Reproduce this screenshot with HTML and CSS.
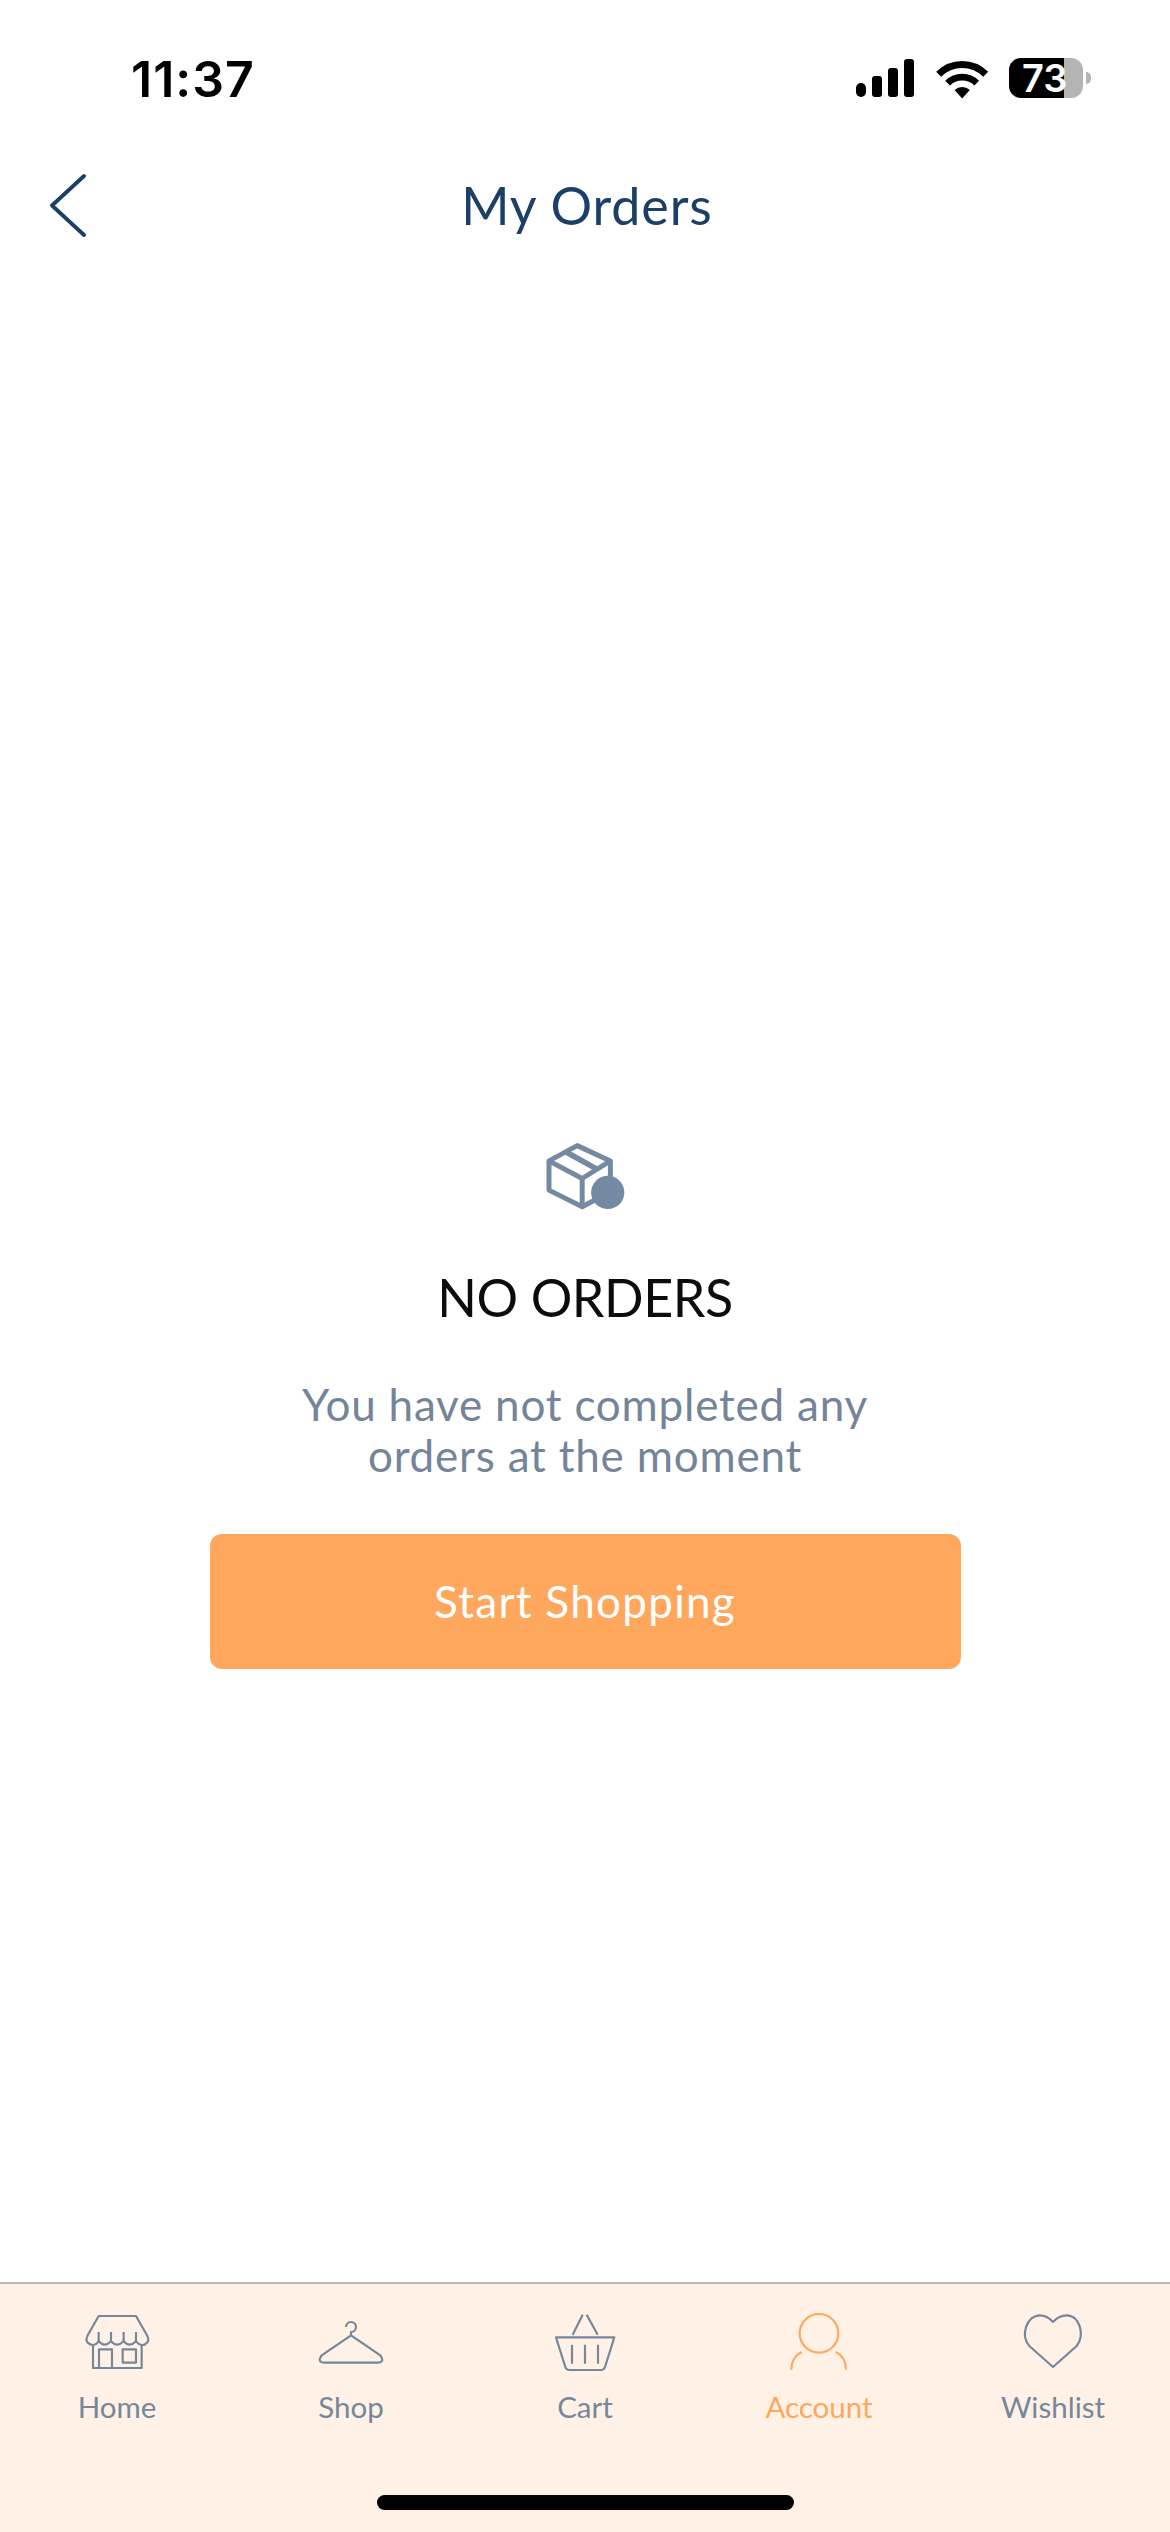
FILE: index.html
```html
<!DOCTYPE html>
<html lang="en">
<head>
	<meta charset="UTF-8">
	<title>My Orders</title>
	<meta name="viewport" content="width=device-width, initial-scale=1.0">
	<link rel="stylesheet" href="styles.css">
</head>
<body>
	<div class="page">
		<div class="status">
			<span class="time">11:37</span>
			<div class="status-icons">
				<div class="signal">
					<span class="bar bar1"></span>
					<span class="bar bar2"></span>
					<span class="bar bar3"></span>
					<span class="bar bar4"></span>
				</div>
				<svg class="wifi" viewBox="345 50 160 122" width="53" height="41">
					<path d="M353 95A100 100 0 0 1 495 95" fill="none" stroke="#000" stroke-width="21"/>
					<path d="M380 122A62 62 0 0 1 468 122" fill="none" stroke="#000" stroke-width="20"/>
					<path d="M424 168L401 143A33 33 0 0 1 447 143Z" fill="#000"/>
				</svg>
				<div class="battery">
					<div class="battery-body"><span class="battery-num">73</span></div>
					<span class="battery-nub"></span>
				</div>
			</div>
		</div>

		<div class="topbar">
			<svg class="back" viewBox="0 0 36 64" width="36" height="64">
				<path d="M34 3L2 32.500L34 62" fill="none" stroke="#1b3f66" stroke-width="3.800" stroke-linecap="round" stroke-linejoin="round"/>
			</svg>
			<h1 class="title">My Orders</h1>
		</div>

		<div class="main">
			<svg class="box-icon" viewBox="130 90 250 215" width="83" height="72">
				<g fill="none" stroke="#748aa3" stroke-width="15" stroke-linejoin="round">
					<path d="M230 106L145 152V240L245 290L330 245V152Z"/>
					<path d="M145 152L245 205L330 152"/>
					<path d="M245 205V290"/>
					<path d="M198 126L288 176" stroke-width="17"/>
				</g>
				<circle cx="322" cy="247" r="50" fill="#748aa3"/>
			</svg>
			<h2 class="empty-head">NO ORDERS</h2>
			<p class="empty-text">You have not completed any<br>orders at the moment</p>
			<a class="btn">Start Shopping</a>
		</div>

		<div class="tabbar">
			<div class="tabs">
				<div class="tab">
					<svg class="tab-icon" viewBox="245 120 210 180" width="70" height="60">
						<g fill="none" stroke="#77879a" stroke-width="6.500" stroke-linejoin="round">
							<path d="M295 132H407L440 190Q448 205 440 212Q424 228 407 208Q388 228 370 208Q350 228 332 208Q313 228 295 208Q280 228 262 212Q255 205 262 190Z"/>
							<path d="M295 208V180M332 208V180M370 208V180M407 208V180"/>
							<path d="M278 222V288H424V222"/>
							<path d="M296 288V232H335V288"/>
							<rect x="367" y="232" width="40" height="40"/>
						</g>
					</svg>
					<span class="tab-label">Home</span>
				</div>
				<div class="tab">
					<svg class="tab-icon" viewBox="945 120 210 180" width="70" height="60">
						<path d="M1035 165A15 15 0 1 1 1050 180V190L1138 250Q1152 270 1132 272H968Q948 270 962 250L1050 190" fill="none" stroke="#77879a" stroke-width="6.500" stroke-linejoin="round"/>
					</svg>
					<span class="tab-label">Shop</span>
				</div>
				<div class="tab">
					<svg class="tab-icon" viewBox="387 120 210 180" width="70" height="60">
						<g fill="none" stroke="#77879a" stroke-width="6.500" stroke-linejoin="round">
							<path d="M405 196H580L552 285Q549 294 540 294H445Q436 294 433 285Z"/>
							<path d="M455 188L485 128M497 128L530 188"/>
							<path d="M453 218V275M492 218V275M531 218V275"/>
						</g>
					</svg>
					<span class="tab-label">Cart</span>
				</div>
				<div class="tab active">
					<svg class="tab-icon" viewBox="102 120 210 180" width="70" height="60">
						<g fill="none" stroke="#ffa75d" stroke-width="6.500">
							<circle cx="207" cy="184" r="58"/>
							<path d="M124 293Q124 255 155 240M257 240Q288 255 288 293"/>
						</g>
					</svg>
					<span class="tab-label">Account</span>
				</div>
				<div class="tab">
					<svg class="tab-icon" viewBox="804 120 210 180" width="70" height="60">
						<path d="M909 285L838 222C810 190 830 130 870 130C890 130 900 140 909 150C918 140 928 130 950 130C990 130 1005 190 980 222Z" fill="none" stroke="#77879a" stroke-width="6.500" stroke-linejoin="round"/>
					</svg>
					<span class="tab-label">Wishlist</span>
				</div>
			</div>
			<div class="home-bar"></div>
		</div>
	</div>
</body>
</html>
```

FILE: styles.css
```css
html, body {
	margin: 0;
	padding: 0;
	background: #fff;
}

body {
	font-family: Lato, "Noto Sans", sans-serif;
}

.page {
	display: flex;
	flex-direction: column;
	width: 1170px;
	height: 2532px;
	overflow: hidden;
}

/* status bar */
.status {
	display: flex;
	justify-content: space-between;
	height: 150px;
	padding: 50px 79px 0 131px;
	box-sizing: border-box;
}

.time {
	font-family: Inter, sans-serif;
	font-weight: 600;
	font-size: 50px;
	line-height: 58px;
	letter-spacing: 1px;
	color: #000;
}

.status-icons {
	display: flex;
	align-items: flex-start;
	padding-top: 8px;
}

.signal {
	display: flex;
	align-items: flex-end;
	gap: 6px;
	height: 38px;
	margin-right: 22px;
	margin-top: 1px;
}

.bar {
	display: block;
	width: 10px;
	background: #000;
	border-radius: 3px;
}
.bar1 { height: 14px; border-radius: 5px; }
.bar2 { height: 21px; }
.bar3 { height: 29px; }
.bar4 { height: 38px; }

.wifi {
	margin-right: 20px;
	margin-top: 1px;
}

.battery {
	display: flex;
	align-items: center;
}

.battery-body {
	width: 74px;
	height: 40px;
	border-radius: 12px;
	background: linear-gradient(to right, #000 55px, #b4b4b4 55px);
}

.battery-num {
	display: block;
	padding-left: 13px;
	font-family: Inter, sans-serif;
	font-weight: 600;
	font-size: 38px;
	line-height: 40px;
	color: #fff;
}

.battery-nub {
	width: 5px;
	height: 12px;
	margin-left: 3px;
	border-radius: 0 5px 5px 0;
	background: #b4b4b4;
}

/* header */
.topbar {
	display: flex;
	align-items: center;
	height: 110px;
	padding-left: 50px;
}

.back {
	flex: none;
	margin-right: -86px;
}

.title {
	flex: 1;
	margin: 0;
	padding-left: 4px;
	text-align: center;
	font-weight: 400;
	font-size: 52px;
	letter-spacing: 0.9px;
	color: #1b3f66;
}

/* empty state */
.main {
	flex: 1;
	display: flex;
	flex-direction: column;
	align-items: center;
	padding-top: 880px;
}

.box-icon {
	flex: none;
}

.empty-head {
	margin: 54px 0 0;
	font-weight: 400;
	font-size: 52px;
	line-height: 62px;
	letter-spacing: -0.4px;
	color: #0c0c0c;
}

.empty-text {
	margin: 51px 0 0;
	text-align: center;
	font-size: 44px;
	line-height: 51px;
	letter-spacing: 0.8px;
	color: #748499;
}

.btn {
	display: block;
	width: 751px;
	height: 135px;
	margin-top: 53px;
	border-radius: 12px;
	background: #ffa75d;
	text-align: center;
	font-size: 44px;
	line-height: 135px;
	letter-spacing: 1.3px;
	color: #fff;
}

/* tab bar */
.tabbar {
	height: 250px;
	box-sizing: border-box;
	border-top: 2px solid #bcb9b6;
	background: #fff1e6;
}

.tabs {
	display: grid;
	grid-template-columns: repeat(5, 1fr);
	padding-top: 28px;
}

.tab {
	display: flex;
	flex-direction: column;
	align-items: center;
	color: #77879a;
}

.tab.active {
	color: #ffa75d;
}

.tab-label {
	margin-top: 15px;
	font-size: 29.5px;
	line-height: 40px;
}

.home-bar {
	width: 417px;
	height: 15px;
	margin: 68px auto 0;
	border-radius: 8px;
	background: #000;
}
```
